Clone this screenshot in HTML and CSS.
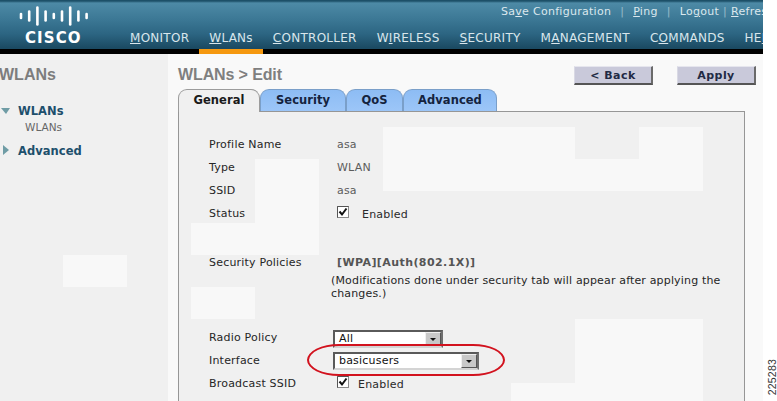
FILE: index.html
```html
<!DOCTYPE html>
<html lang="en">
<head>
<meta charset="utf-8">
<title>WLANs &gt; Edit</title>
<link rel="stylesheet" href="styles.css">
</head>
<body>
<div class="page">
  <header class="header">
    <div class="brand">
      <svg class="bars" width="72" height="20" viewBox="0 0 72 20" aria-hidden="true">
        <g stroke="#ffffff" stroke-width="2.6" stroke-linecap="round">
          <line x1="2" y1="8" x2="2" y2="12"/>
          <line x1="10.2" y1="5.5" x2="10.2" y2="14.5"/>
          <line x1="18.4" y1="1.5" x2="18.4" y2="18.5"/>
          <line x1="26.6" y1="5.5" x2="26.6" y2="14.5"/>
          <line x1="34.8" y1="8" x2="34.8" y2="12"/>
          <line x1="43" y1="5.5" x2="43" y2="14.5"/>
          <line x1="51.2" y1="1.5" x2="51.2" y2="18.5"/>
          <line x1="59.4" y1="5.5" x2="59.4" y2="14.5"/>
          <line x1="67.6" y1="8" x2="67.6" y2="12"/>
        </g>
      </svg>
      <div class="wordmark">CISCO</div>
    </div>
    <div class="toplinks">
      <span>Sa<u>v</u>e Configuration</span><i class="sep">|</i>
      <span><u>P</u>ing</span><i class="sep">|</i>
      <span>Lo<u>g</u>out</span><i class="sep sep-tight">|</i>
      <span><u>R</u>efresh</span>
    </div>
    <nav class="nav">
      <span><u>M</u>ONITOR</span>
      <span class="current"><u>W</u>LANs</span>
      <span><u>C</u>ONTROLLER</span>
      <span>W<u>I</u>RELESS</span>
      <span><u>S</u>ECURITY</span>
      <span>M<u>A</u>NAGEMENT</span>
      <span>C<u>O</u>MMANDS</span>
      <span>HE<u>L</u>P</span>
    </nav>
  </header>
  <div class="blackbar"><div class="orange"></div></div>
  <div class="body">
    <aside class="sidebar">
      <h2 class="side-title">WLANs</h2>
      <div class="side-item side-first"><span class="tri-down"></span><b>WLANs</b></div>
      <div class="side-sub">WLANs</div>
      <div class="side-item side-adv"><span class="tri-right"></span><b>Advanced</b></div>
    </aside>
    <main class="main">
      <div class="titlebar">
        <h1 class="title">WLANs &gt; Edit</h1>
        <div class="buttons">
          <button class="btn" type="button">&lt; Back</button>
          <button class="btn" type="button">Apply</button>
        </div>
      </div>
      <div class="tabs">
        <div class="tab tab-active">General</div>
        <div class="tab tab-security">Security</div>
        <div class="tab tab-qos">QoS</div>
        <div class="tab tab-adv">Advanced</div>
      </div>
      <section class="panel">
        <div class="row"><span class="label">Profile Name</span><span class="value">asa</span></div>
        <div class="row"><span class="label">Type</span><span class="value">WLAN</span></div>
        <div class="row"><span class="label">SSID</span><span class="value">asa</span></div>
        <div class="row"><span class="label">Status</span>
          <span class="check-wrap">
            <svg class="check" width="12" height="12" viewBox="0 0 12 12" aria-hidden="true"><rect x="0.5" y="0.5" width="11" height="11" fill="#fff" stroke="#8a8a8a"/><path d="M0.5 11.5V0.5H11.5" fill="none" stroke="#555"/><path d="M2.5 5.5L5 8.5L9.5 2.5" fill="none" stroke="#111" stroke-width="2"/></svg>
            <span class="enabled enabled-a">Enabled</span>
          </span>
        </div>
        <div class="row row-security"><span class="label">Security Policies</span><strong class="policy">[WPA][Auth(802.1X)]</strong></div>
        <p class="note">(Modifications done under security tab will appear after applying the changes.)</p>
        <div class="row row-radio"><span class="label">Radio Policy</span>
          <div class="select select-short"><span>All</span><i class="arrow"></i></div>
        </div>
        <div class="row"><span class="label">Interface</span>
          <div class="select select-long"><span>basicusers</span><i class="arrow"></i></div>
        </div>
        <div class="row"><span class="label">Broadcast SSID</span>
          <span class="check-wrap">
            <svg class="check" width="12" height="12" viewBox="0 0 12 12" aria-hidden="true"><rect x="0.5" y="0.5" width="11" height="11" fill="#fff" stroke="#8a8a8a"/><path d="M0.5 11.5V0.5H11.5" fill="none" stroke="#555"/><path d="M2.5 5.5L5 8.5L9.5 2.5" fill="none" stroke="#111" stroke-width="2"/></svg>
            <span class="enabled enabled-b">Enabled</span>
          </span>
        </div>
      </section>
    </main>
  </div>
  <div class="patch p1"></div>
  <div class="patch p2"></div>
  <div class="patch p3"></div>
  <div class="patch p4"></div>
  <div class="patch p5"></div>
  <div class="patch p6"></div>
  <div class="patch p7"></div>
  <div class="patch p8"></div>
  <div class="patch p9"></div>
  <div class="oval"></div>
</div>
<div class="figure-id">225283</div>
</body>
</html>
```
FILE: styles.css
```css
* { box-sizing: border-box; }
html, body { margin: 0; padding: 0; background: #fff; }
body { width: 777px; height: 401px; overflow: hidden; position: relative; font-family: "DejaVu Sans", sans-serif; }
u { text-decoration: underline; }

.page { width: 763px; height: 401px; overflow: hidden; position: relative; background: #f9f9f9; }

.header {
  height: 49px; position: relative; overflow: hidden; color: #e4eef2;
  background: linear-gradient(#1d5068 0, #1d5068 1px, #4d8aa6 3px, #3b7794 20px, #2c6582 34px, #1b4a62 48px);
}
.brand { position: absolute; left: 19px; top: 6px; width: 72px; }
.bars { display: block; }
.wordmark { font: bold 15px/13px "DejaVu Sans", sans-serif; letter-spacing: 1.1px; color: #fff; margin: 6px 0 0 6px; }

.toplinks { position: absolute; left: 501px; top: 5px; white-space: nowrap; font-size: 11px; line-height: 14px; letter-spacing: 0.28px; color: #dbe8ee; display: flex; }
.sep { font-style: normal; opacity: .55; margin: 0 9px 0 9px; }
.sep-tight { margin: 0 4px 0 4px; }

.nav { position: absolute; left: 130px; top: 31px; display: flex; gap: 20px; white-space: nowrap; font-size: 12px; line-height: 15px; letter-spacing: 0.26px; color: #d9e6ec; }

.blackbar { height: 5px; background: #000; position: relative; }
.orange { position: absolute; left: 199px; top: 0; width: 64px; height: 5px; background: #f5980f; }

.body { display: flex; height: 347px; }

.sidebar { width: 168px; background: #f0f0f0; flex: none; }
.side-title { margin: 12px 0 0 -1px; font: bold 16px/18px "Liberation Sans", sans-serif; color: #7d7d7d; }
.side-item { display: flex; align-items: center; color: #1d4f6c; font-size: 11.5px; line-height: 16px; letter-spacing: 0.05px; }
.side-item b { margin-left: 8px; }
.side-first { margin-top: 19px; }
.side-sub { margin: 1px 0 0 25px; font-size: 10.5px; line-height: 14px; color: #666; }
.side-adv { margin-top: 9px; }
.tri-down { width: 0; height: 0; margin-left: 1px; border-left: 5px solid transparent; border-right: 4px solid transparent; border-top: 6px solid #6f9ca5; }
.tri-right { width: 0; height: 0; margin-left: 3px; margin-right: 1px; margin-top: -2px; border-top: 5px solid transparent; border-bottom: 5px solid transparent; border-left: 6px solid #6f9ca5; }

.main { flex: 1; padding-left: 10px; min-width: 0; }
.titlebar { display: flex; justify-content: space-between; height: 35px; padding-top: 12px; position: relative; }
.title { margin: 0; font: bold 16px/18px "Liberation Sans", sans-serif; letter-spacing: -0.12px; color: #7f7f7f; }
.buttons { display: flex; gap: 24px; margin-right: 7px; }
.btn {
  width: 79px; height: 19px; padding: 0; font: bold 11px/15px "DejaVu Sans", sans-serif; letter-spacing: 0.45px; color: #222a44;
  background: #c9c9da; border: 1px solid; border-color: #e6e6ee #6a6a6a #555 #d9d9e4; border-width: 1px 2px 2px 1px;
}

.tabs { display: flex; height: 22px; position: relative; z-index: 1; }
.tab {
  height: 22px; font-size: 11.5px; font-weight: bold; line-height: 21px; letter-spacing: 0.05px; text-align: center; color: #14233e;
  background: linear-gradient(#8dbcf4, #9cc6f8); border: 1px solid #7a9fc9; border-bottom: 0; border-radius: 9px 9px 0 0;
}
.tab-active { width: 82px; height: 23px; background: #f0f0f0; border-color: #9c9c9c; color: #1a1a1a; }
.tab-security { width: 86px; }
.tab-qos { width: 57px; }
.tab-adv { width: 94px; }

.panel {
  width: 567px; height: 400px; background: #f0f0f0; border: 1px solid #969696; padding: 21px 0 0 30px; color: #222; font-size: 11px; letter-spacing: 0.2px;
}
.row { display: flex; align-items: center; height: 23px; }
.label { width: 128px; flex: none; color: #262626; }
.value { color: #5c5c5c; }
.check-wrap { display: flex; align-items: center; color: #2a2a2a; }
.check { display: block; flex: none; margin-top: -3px; }
.enabled { position: relative; top: 1px; }
.enabled-a { margin-left: 13px; }
.enabled-b { margin-left: 9px; }
.row-security { margin-top: 26px; }
.policy { color: #555; font-weight: bold; letter-spacing: 0.42px; }
.note { width: 398px; margin: 0 0 0 122px; height: 26px; line-height: 13px; letter-spacing: 0.16px; color: #262626; }
.row-radio { margin-top: 26px; }

.select {
  position: relative; margin-left: -4px; background: #fff; display: flex; align-items: center; justify-content: space-between;
  border: 2px solid; border-color: #5a5a5a #6e6e6e #d4d4d4 #5a5a5a; padding: 0 0 0 4px; color: #111; font-size: 11px;
}
.select-short { width: 110px; height: 18px; margin-top: 2px; }
.select-long { width: 146px; height: 18px; }
.arrow { display: block; width: 16px; height: 14px; background: #c8c8c8; border: 1px solid; border-color: #efefef #555 #555 #efefef; position: relative; flex: none; }
.arrow::after { content: ""; position: absolute; left: 4px; top: 5px; border-left: 3px solid transparent; border-right: 3px solid transparent; border-top: 3px solid #111; }

.patch { position: absolute; background: #f8f8f8; }
.p1 { left: 383px; top: 127px; width: 192px; height: 64px; }
.p2 { left: 575px; top: 159px; width: 64px; height: 32px; }
.p3 { left: 639px; top: 127px; width: 64px; height: 64px; }
.p4 { left: 255px; top: 159px; width: 64px; height: 64px; }
.p5 { left: 191px; top: 223px; width: 128px; height: 32px; }
.p6 { left: 191px; top: 287px; width: 64px; height: 32px; }
.p7 { left: 63px; top: 255px; width: 64px; height: 32px; }
.p8 { left: 575px; top: 319px; width: 128px; height: 82px; }
.p9 { left: 511px; top: 383px; width: 64px; height: 18px; }

.oval { position: absolute; left: 307px; top: 344px; width: 198px; height: 32px; border: 2px solid #d2121e; border-radius: 32px / 16px; z-index: 2; }

.figure-id { position: absolute; left: 767px; top: 359px; writing-mode: vertical-rl; transform: rotate(180deg); font: 10.5px/10px "Liberation Sans", sans-serif; letter-spacing: 0.2px; color: #333; }
```
